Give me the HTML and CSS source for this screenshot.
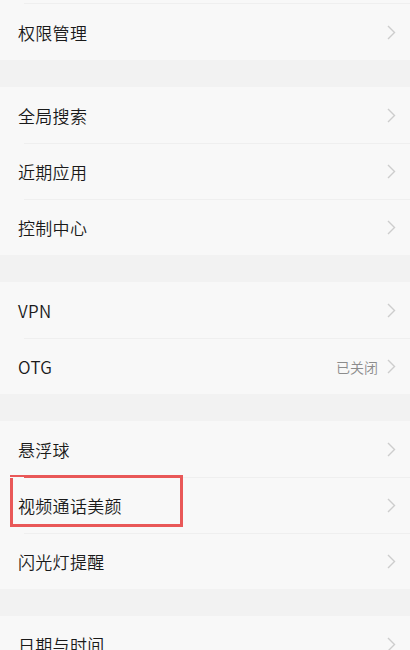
FILE: index.html
```html
<!DOCTYPE html>
<html lang="zh-CN">
<head>
    <meta charset="UTF-8">
    <meta name="viewport" content="width=device-width, initial-scale=1.0">
    <title>设置</title>
    <link rel="stylesheet" href="styles.css">
</head>
<body>
    <div class="settings">
        <div class="group group-first">
            <div class="row">
                <span class="label">权限管理</span>
                <svg class="chevron" viewBox="0 0 9 15"><polyline points="1,1 7.5,7.5 1,14"/></svg>
            </div>
        </div>

        <div class="group">
            <div class="row">
                <span class="label">全局搜索</span>
                <svg class="chevron" viewBox="0 0 9 15"><polyline points="1,1 7.5,7.5 1,14"/></svg>
            </div>
            <div class="row">
                <span class="label">近期应用</span>
                <svg class="chevron" viewBox="0 0 9 15"><polyline points="1,1 7.5,7.5 1,14"/></svg>
            </div>
            <div class="row">
                <span class="label">控制中心</span>
                <svg class="chevron" viewBox="0 0 9 15"><polyline points="1,1 7.5,7.5 1,14"/></svg>
            </div>
        </div>

        <div class="group">
            <div class="row">
                <span class="label">VPN</span>
                <svg class="chevron" viewBox="0 0 9 15"><polyline points="1,1 7.5,7.5 1,14"/></svg>
            </div>
            <div class="row">
                <span class="label">OTG</span>
                <span class="value">已关闭</span>
                <svg class="chevron" viewBox="0 0 9 15"><polyline points="1,1 7.5,7.5 1,14"/></svg>
            </div>
        </div>

        <div class="group">
            <div class="row">
                <span class="label">悬浮球</span>
                <svg class="chevron" viewBox="0 0 9 15"><polyline points="1,1 7.5,7.5 1,14"/></svg>
            </div>
            <div class="row">
                <span class="label">视频通话美颜</span>
                <svg class="chevron" viewBox="0 0 9 15"><polyline points="1,1 7.5,7.5 1,14"/></svg>
                <div class="highlight"></div>
            </div>
            <div class="row">
                <span class="label">闪光灯提醒</span>
                <svg class="chevron" viewBox="0 0 9 15"><polyline points="1,1 7.5,7.5 1,14"/></svg>
            </div>
        </div>

        <div class="group">
            <div class="row">
                <span class="label">日期与时间</span>
                <svg class="chevron" viewBox="0 0 9 15"><polyline points="1,1 7.5,7.5 1,14"/></svg>
            </div>
        </div>
    </div>
</body>
</html>
```

FILE: styles.css
```css
body {
    margin: 0;
    background-color: #f2f2f2;
    font-family: "Noto Sans CJK SC", "Noto Sans", sans-serif;
    overflow: hidden;
}

.settings {
    display: flex;
    flex-direction: column;
    gap: 27px;
}

.group {
    background-color: #f8f8f8;
}

.group-first {
    padding-top: 4px;
}

.group-first .row:first-child::before {
    content: "";
    position: absolute;
    top: -1px;
    left: 24px;
    right: 0;
    height: 1px;
    background-color: #efefef;
}

.row {
    position: relative;
    height: 56px;
    display: flex;
    align-items: center;
    padding: 0 14px 0 18px;
    box-sizing: border-box;
}

.row + .row {
    border-top: 1px solid #efefef;
}

.row + .row::after {
    content: "";
    position: absolute;
    top: -1px;
    left: 0;
    width: 24px;
    height: 1px;
    background-color: #f8f8f8;
}

.label {
    flex: 1;
    font-size: 17px;
    font-weight: 350;
    color: #1a1a1a;
    letter-spacing: 0.3px;
}

.value {
    font-size: 14px;
    font-weight: 350;
    color: #8c8c8c;
    margin-right: 9px;
}

.chevron {
    width: 9px;
    height: 15px;
    fill: none;
    stroke: #cdcdcd;
    stroke-width: 1.4;
}

/* red box drawn over the item */
.highlight {
    position: absolute;
    left: 10px;
    top: -3px;
    width: 173px;
    height: 52px;
    border: 3px solid #e95858;
    box-sizing: border-box;
}
```
